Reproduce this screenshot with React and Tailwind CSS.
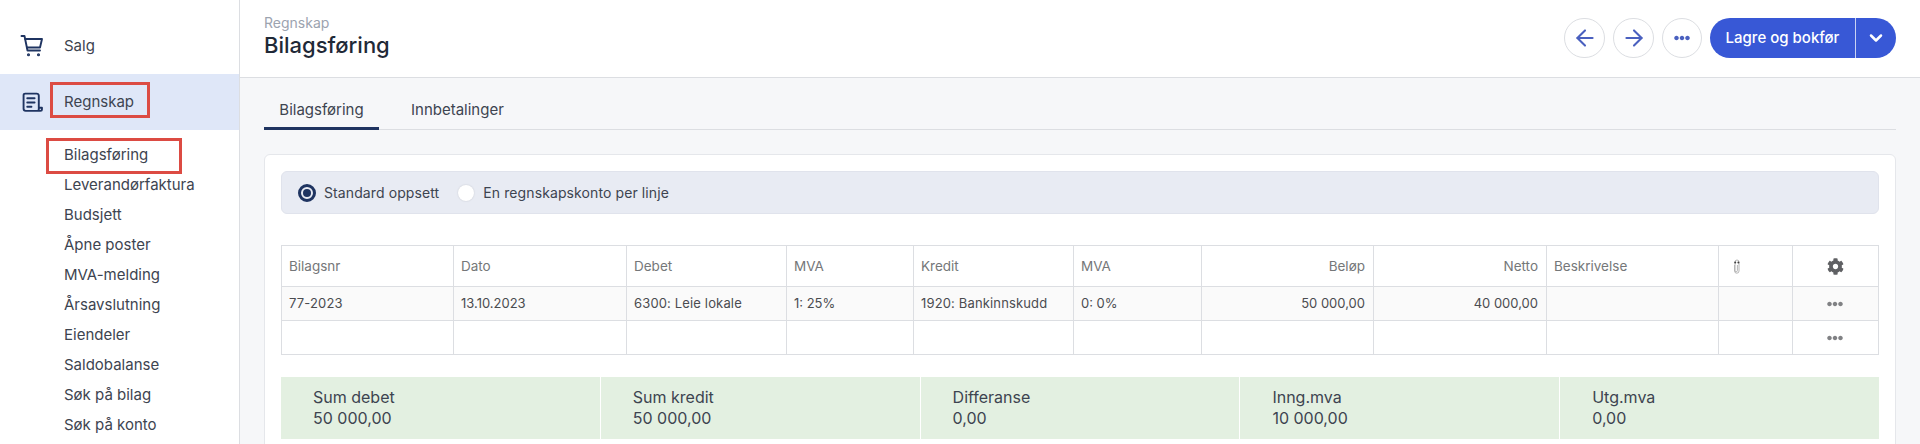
import React from "react";
import { ArrowLeft, ArrowRight, ChevronDown } from "lucide-react";
import { FaCog, FaEllipsisH } from "react-icons/fa";

const sub = ["Bilagsføring", "Leverandørfaktura", "Budsjett", "Åpne poster", "MVA-melding", "Årsavslutning", "Eiendeler", "Saldobalanse", "Søk på bilag", "Søk på konto"];
const cols = [
  { w: "w-[172px]", h: "Bilagsnr", v: "77-2023", t: true },
  { w: "w-[173px]", h: "Dato", v: "13.10.2023" },
  { w: "w-[160px]", h: "Debet", v: "6300: Leie lokale", t: true },
  { w: "w-[127px]", h: "MVA", v: "1: 25%" },
  { w: "w-[160px]", h: "Kredit", v: "1920: Bankinnskudd", t: true },
  { w: "w-[128px]", h: "MVA", v: "0: 0%" },
  { w: "w-[172px]", h: "Beløp", v: "50 000,00", r: true },
  { w: "w-[173px]", h: "Netto", v: "40 000,00", r: true },
  { w: "w-[172px]", h: "Beskrivelse", v: "" },
  { w: "w-[74px]", h: "clip", v: "" },
  { w: "flex-1", h: "gear", v: "dots" },
];
const sums = [["Sum debet", "50 000,00"], ["Sum kredit", "50 000,00"], ["Differanse", "0,00"], ["Inng.mva", "10 000,00"], ["Utg.mva", "0,00"]];

function Ledger() {
  return (
    <svg width="21" height="21" viewBox="0 0 20 20" fill="none" stroke="#1f3461" strokeWidth="1.8" strokeLinecap="round" strokeLinejoin="round">
      <path d="M16 15V3.5A2 2 0 0 0 14 1.5H3A1.5 1.5 0 0 0 1.5 3v13A2 2 0 0 0 3.5 18H17.5A1.5 1.5 0 0 0 19 16.5V15H16V16.5A1.5 1.5 0 0 1 14.5 18" />
      <path d="M5 6h7M5 10h7M5 14h4" />
    </svg>
  );
}

function Clip() {
  return (
    <svg width="8" height="15" viewBox="0 0 8 15" fill="none" stroke="#a3a3a3" strokeWidth="0.8">
      <path d="M1.6 6v6a2.2 2.2 0 0 0 4.4 0V3a2 2 0 0 0-4 0v8.5a1.2 1.2 0 0 0 2.4 0V6" />
      <circle cx="2.2" cy="3.6" r="1" fill="#3f3f3f" stroke="none" />
      <circle cx="5.4" cy="3.6" r="1" fill="#3f3f3f" stroke="none" />
    </svg>
  );
}

function Cell({ c, row }) {
  const base = "h-full flex items-center border-r border-[#dcdee2] last:border-r-0 shrink-0 " + c.w;
  if (row === "h") {
    if (c.h === "clip") return <div className={base + " pl-[14px]"}><Clip /></div>;
    if (c.h === "gear") return <div className={base + " justify-center"}><FaCog className="text-[#5f6063] text-[17px]" /></div>;
    return <div className={base + (c.r ? " justify-end pr-[8px]" : " pl-[7px]") + " text-[#757779] text-[13.5px]"}>{c.h}</div>;
  }
  if (c.v === "dots") return <div className={base + " justify-center pr-[2px]"}><FaEllipsisH className="text-[#808184] text-[16px]" /></div>;
  if (row === "e") return <div className={base} />;
  return <div className={base + (c.r ? " justify-end pr-[8px]" : " pl-[7px]") + (c.t ? " tracking-[0.15px]" : "") + " text-[#4a4c50]"}>{c.v}</div>;
}

export default function App() {
  return (
    <div className="h-[444px] w-[1920px] overflow-hidden flex bg-[#f6f7f9] text-[#3d4450] font-['Inter',sans-serif]">
      <aside className="w-[240px] shrink-0 h-full bg-white border-r border-[#dcdee2] pt-[28px]">
        <div className="h-[36px] flex items-center pl-[20px] gap-[20px] text-[15px] mb-[10px]">
          <svg width="24" height="24" viewBox="0 0 24 24" fill="none" stroke="#1f3461" strokeWidth="1.9" strokeLinecap="round" strokeLinejoin="round">
            <path d="M1.5 2h3l3 14.5h12.5" />
            <path d="M5.2 5H22l-2 8.5H7" />
            <circle cx="8.5" cy="20.8" r="0.6" fill="#1f3461" />
            <circle cx="18.5" cy="20.8" r="0.6" fill="#1f3461" />
          </svg>
          <span>Salg</span>
        </div>
        <div className="h-[56px] bg-[#dfe7f8] flex items-center pl-[22px] gap-[21px] text-[15px] relative">
          <Ledger />
          <span>Regnskap</span>
          <div className="absolute left-[50px] top-[8px] w-[100px] h-[36px] border-[3px] border-[#dc4b43]" />
        </div>
        <div className="relative pt-[10px] pl-[64px] text-[15px] leading-[30px]">
          <div className="absolute left-[46px] top-[8px] w-[136px] h-[36px] border-[3px] border-[#dc4b43]" />
          {sub.map((s) => <div key={s} className="h-[30px]">{s}</div>)}
        </div>
      </aside>
      <main className="flex-1 min-w-0">
        <header className="h-[78px] bg-white border-b border-[#dcdee2] flex justify-between pl-[24px] pr-[24px]">
          <div className="pt-[14px]">
            <div className="text-[14px] leading-[18px] text-[#9ca3af]">Regnskap</div>
            <div className="text-[22px] leading-[27px] font-medium text-[#1f2937]">Bilagsføring</div>
          </div>
          <div className="flex items-start pt-[18px] gap-[8px]">
            <button className="w-[41px] h-[40px] rounded-full border border-[#dcdee2] flex items-center justify-center text-[#4a60bf]"><ArrowLeft size={26} strokeWidth={1.9} /></button>
            <button className="w-[41px] h-[40px] rounded-full border border-[#dcdee2] flex items-center justify-center text-[#4a60bf]"><ArrowRight size={26} strokeWidth={1.9} /></button>
            <button className="w-[40px] h-[40px] rounded-full border border-[#dcdee2] flex items-center justify-center text-[#4a60bf]"><FaEllipsisH size={16} /></button>
            <div className="h-[40px] flex text-white bg-[#3858d6] rounded-full">
              <div className="w-[146px] flex items-center justify-center text-[15px] font-medium border-r border-[#c9d2f3]">Lagre og bokfør</div>
              <div className="w-[40px] flex items-center justify-center"><ChevronDown size={20} strokeWidth={3} /></div>
            </div>
          </div>
        </header>
        <div className="pl-[24px] pr-[24px]">
          <div className="h-[52px] border-b border-[#dcdee2] flex items-stretch text-[15px]">
            <div className="w-[115px] flex items-center justify-center border-b-[3px] border-[#1f3461] -mb-px pt-[16px]">Bilagsføring</div>
            <div className="pl-[32px] flex items-center pt-[13px]">Innbetalinger</div>
          </div>
          <section className="mt-[24px] h-[320px] bg-white border border-[#e5e7eb] rounded-[6px] pt-[16px] px-[16px]">
            <div className="h-[43px] bg-[#e8ebf3] border border-[#e0e3ec] rounded-[6px] flex items-center pl-[16px] text-[14px] tracking-[0.1px]">
              <span className="w-[18px] h-[18px] rounded-full border-[3px] border-[#1f3461] flex items-center justify-center mr-[8px]"><span className="w-[8px] h-[8px] rounded-full bg-[#1f3461]" /></span>
              <span>Standard oppsett</span>
              <span className="w-[16px] h-[16px] rounded-full bg-white ml-[19px] mr-[9px] shadow-[0_0_2px_rgba(0,0,0,0.15)]" />
              <span>En regnskapskonto per linje</span>
            </div>
            <div className="mt-[31px] h-[110px] border border-[#dcdee2] text-[13px] flex flex-col">
              <div className="h-[41px] flex border-b border-[#dcdee2]">{cols.map((c, i) => <Cell key={i} c={c} row="h" />)}</div>
              <div className="h-[34px] flex border-b border-[#dcdee2] bg-[#fafafa]">{cols.map((c, i) => <Cell key={i} c={c} row="d" />)}</div>
              <div className="flex-1 flex">{cols.map((c, i) => <Cell key={i} c={c} row="e" />)}</div>
            </div>
            <div className="mt-[22px] h-[62px] grid grid-cols-5 gap-px text-[16px] leading-[21px]">
              {sums.map(([a, b]) => (
                <div key={a} className="bg-[#e3f0e1] pl-[32px] pt-[10px]"><div>{a}</div><div>{b}</div></div>
              ))}
            </div>
          </section>
        </div>
      </main>
    </div>
  );
}
